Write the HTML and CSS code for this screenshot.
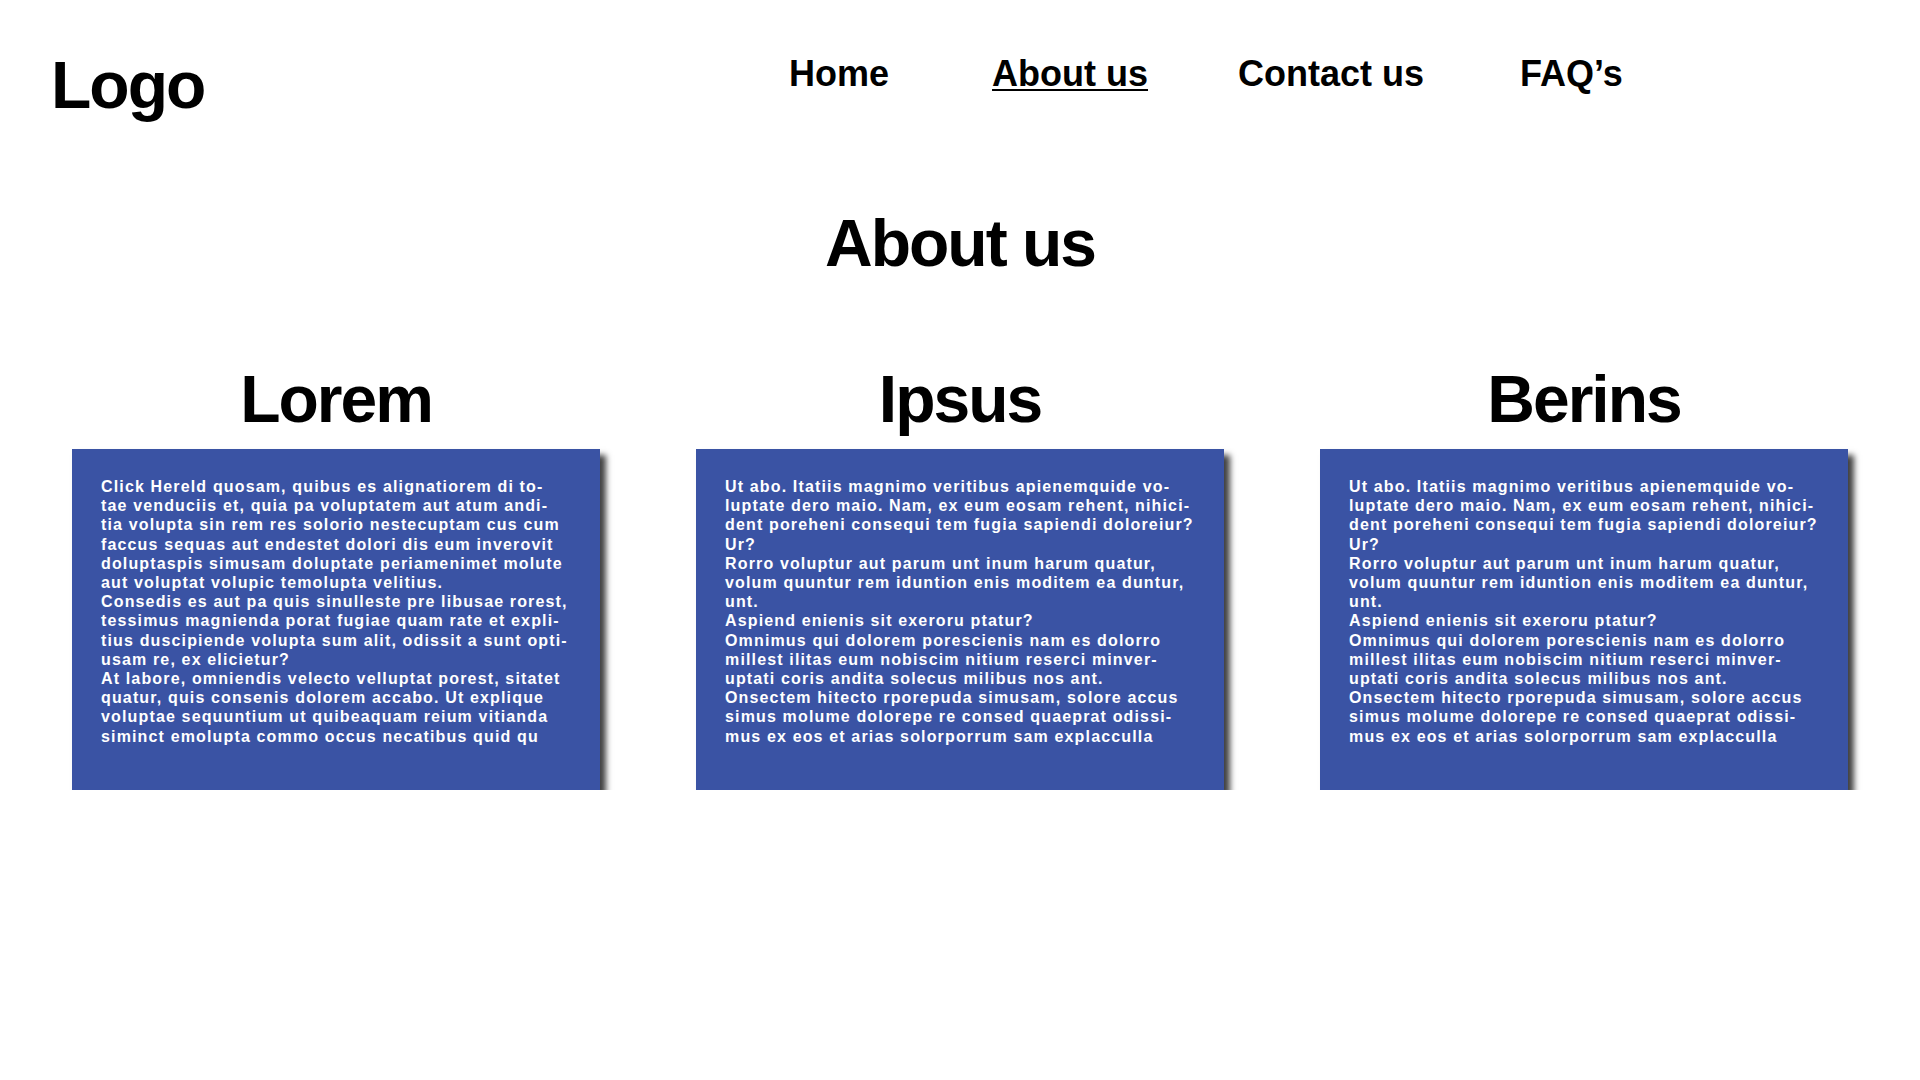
FILE: index.html
```html
<!DOCTYPE html>
<html lang="en">
<head>
<meta charset="utf-8">
<title>About us</title>
<link rel="stylesheet" href="styles.css">
</head>
<body>
<header class="site-header">
  <div class="logo">Logo</div>
  <nav class="nav">
    <a class="nav-link" href="#">Home</a>
    <a class="nav-link active" href="#">About us</a>
    <a class="nav-link contact" href="#">Contact us</a>
    <a class="nav-link" href="#">FAQ’s</a>
  </nav>
</header>
<main class="page">
  <h1 class="page-title">About us</h1>
  <section class="columns">
    <div class="column">
      <h2 class="column-title">Lorem</h2>
      <div class="card">
        <p>Click Hereld quosam, quibus es alignatiorem di to-<br>tae venduciis et, quia pa voluptatem aut atum andi-<br>tia volupta sin rem res solorio nestecuptam cus cum<br>faccus sequas aut endestet dolori dis eum inverovit<br>doluptaspis simusam doluptate periamenimet molute<br>aut voluptat volupic temolupta velitius.</p>
        <p>Consedis es aut pa quis sinulleste pre libusae rorest,<br>tessimus magnienda porat fugiae quam rate et expli-<br>tius duscipiende volupta sum alit, odissit a sunt opti-<br>usam re, ex elicietur?</p>
        <p>At labore, omniendis velecto velluptat porest, sitatet<br>quatur, quis consenis dolorem accabo. Ut explique<br>voluptae sequuntium ut quibeaquam reium vitianda<br>siminct emolupta commo occus necatibus quid qu</p>
      </div>
    </div>
    <div class="column">
      <h2 class="column-title">Ipsus</h2>
      <div class="card">
        <p>Ut abo. Itatiis magnimo veritibus apienemquide vo-<br>luptate dero maio. Nam, ex eum eosam rehent, nihici-<br>dent poreheni consequi tem fugia sapiendi doloreiur?<br>Ur?</p>
        <p>Rorro voluptur aut parum unt inum harum quatur,<br>volum quuntur rem iduntion enis moditem ea duntur,<br>unt.</p>
        <p>Aspiend enienis sit exeroru ptatur?</p>
        <p>Omnimus qui dolorem porescienis nam es dolorro<br>millest ilitas eum nobiscim nitium reserci minver-<br>uptati coris andita solecus milibus nos ant.</p>
        <p>Onsectem hitecto rporepuda simusam, solore accus<br>simus molume dolorepe re consed quaeprat odissi-<br>mus ex eos et arias solorporrum sam explacculla</p>
      </div>
    </div>
    <div class="column">
      <h2 class="column-title">Berins</h2>
      <div class="card">
        <p>Ut abo. Itatiis magnimo veritibus apienemquide vo-<br>luptate dero maio. Nam, ex eum eosam rehent, nihici-<br>dent poreheni consequi tem fugia sapiendi doloreiur?<br>Ur?</p>
        <p>Rorro voluptur aut parum unt inum harum quatur,<br>volum quuntur rem iduntion enis moditem ea duntur,<br>unt.</p>
        <p>Aspiend enienis sit exeroru ptatur?</p>
        <p>Omnimus qui dolorem porescienis nam es dolorro<br>millest ilitas eum nobiscim nitium reserci minver-<br>uptati coris andita solecus milibus nos ant.</p>
        <p>Onsectem hitecto rporepuda simusam, solore accus<br>simus molume dolorepe re consed quaeprat odissi-<br>mus ex eos et arias solorporrum sam explacculla</p>
      </div>
    </div>
  </section>
</main>
</body>
</html>
```
FILE: styles.css
```css
html, body {
  margin: 0;
  padding: 0;
  background: #ffffff;
}

body {
  font-family: "Liberation Sans", Arial, Helvetica, sans-serif;
  color: #000000;
  font-weight: 700;
}

.site-header {
  display: grid;
  grid-template-columns: 738px auto;
  align-items: start;
  padding: 52px 0 0 51px;
}

.logo {
  font-size: 66px;
  line-height: 66px;
  letter-spacing: -2px;
}

.nav {
  display: flex;
  gap: 96px;
  margin-top: 4px;
}

.nav-link {
  font-size: 36px;
  line-height: 36px;
  color: #000000;
  text-decoration: none;
}

.nav-link.active {
  margin-left: 7px;
  text-decoration: underline;
  text-decoration-thickness: 2px;
  text-underline-offset: 3px;
}

.nav-link.contact {
  margin-left: -6px;
}

.page {
  display: flex;
  flex-direction: column;
  align-items: center;
}

.page-title {
  margin: 92px 0 0 0;
  font-size: 66px;
  line-height: 66px;
  letter-spacing: -2px;
  font-weight: 700;
}

.columns {
  display: grid;
  grid-template-columns: repeat(3, 528px);
  column-gap: 96px;
  margin-top: 90px;
}

.column {
  display: flex;
  flex-direction: column;
  align-items: center;
}

.column-title {
  margin: 0;
  font-size: 66px;
  line-height: 66px;
  letter-spacing: -2px;
  font-weight: 700;
}

.card {
  align-self: stretch;
  margin-top: 17px;
  background: #3a53a4;
  color: #ffffff;
  padding: 28px 29px 44px 29px;
  box-shadow: 6px 6px 6px rgba(0, 0, 0, 0.75);
  font-size: 16px;
  line-height: 19.2px;
  letter-spacing: 1.15px;
}

.card p {
  margin: 0;
  white-space: nowrap;
}
```
